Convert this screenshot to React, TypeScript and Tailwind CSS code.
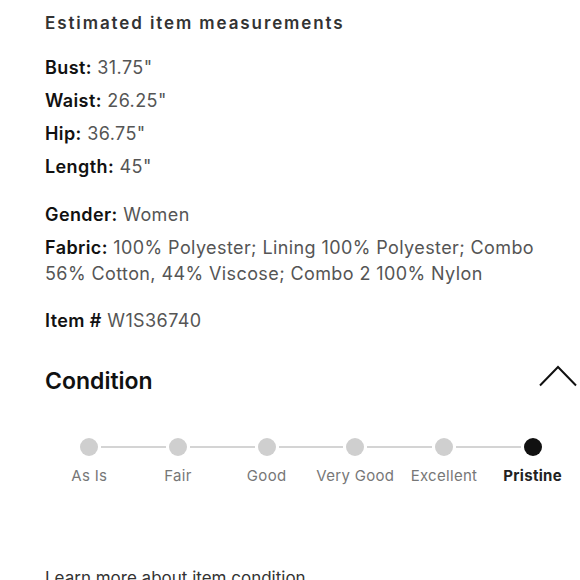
const measurements = [
  { label: "Bust:", value: '31.75"' },
  { label: "Waist:", value: '26.25"' },
  { label: "Hip:", value: '36.75"' },
  { label: "Length:", value: '45"' },
];

const grades = ["As Is", "Fair", "Good", "Very Good", "Excellent", "Pristine"];
const current = 5;

function Row({ label, value }: { label: string; value: string }) {
  return (
    <p className="text-[18px] leading-[26px] tracking-[0.4px]">
      <span className="font-semibold text-[#111]">{label}</span>{" "}
      <span className="text-[#555]">{value}</span>
    </p>
  );
}

export default function App() {
  return (
    <div
      className="w-[580px] h-[580px] overflow-hidden bg-white pl-[45px] pr-[3px] pt-[11px]"
      style={{ fontFamily: "Inter, 'Noto Sans', sans-serif" }}
    >
      <h3 className="text-[17px] leading-[24px] font-semibold tracking-[1.9px] text-[#333]">
        Estimated item measurements
      </h3>

      <div className="mt-[20px] flex flex-col gap-[7px]">
        {measurements.map((m) => (
          <Row key={m.label} {...m} />
        ))}
      </div>

      <div className="mt-[22px] flex flex-col gap-[7px]">
        <Row label="Gender:" value="Women" />
        <Row
          label="Fabric:"
          value="100% Polyester; Lining 100% Polyester; Combo 56% Cotton, 44% Viscose; Combo 2 100% Nylon"
        />
      </div>

      <div className="mt-[21px]">
        <Row label="Item #" value="W1S36740" />
      </div>

      <div className="mt-[30px] flex items-start justify-between">
        <h2 className="mt-[2px] text-[23px] leading-[30px] font-semibold text-[#111]">Condition</h2>
        <svg width="38" height="22" viewBox="0 0 38 22" fill="none" className="mt-[1px]">
          <path d="M1 20.5 L19 2 L37 20.5" stroke="#111" strokeWidth="2" />
        </svg>
      </div>

      <div className="mt-[42px] grid grid-cols-6">
        {grades.map((g, i) => (
          <div key={g} className="flex flex-col items-center">
            <div className="flex w-full items-center">
              <div className={`h-[2px] flex-1 mr-[3px] ${i === 0 ? "bg-transparent" : "bg-[#d4d4d4]"}`} />
              <div
                className={`h-[18px] w-[18px] rounded-full ${i === current ? "bg-[#111]" : "bg-[#cfcfcf]"}`}
              />
              <div
                className={`h-[2px] flex-1 ml-[3px] ${i === grades.length - 1 ? "bg-transparent" : "bg-[#d4d4d4]"}`}
              />
            </div>
            <span
              className={`mt-[10px] text-[15px] leading-[20px] tracking-[0.3px] whitespace-nowrap ${
                i === current ? "font-bold text-[#222]" : "text-[#777]"
              }`}
            >
              {g}
            </span>
          </div>
        ))}
      </div>

      <a href="#" className="mt-[80px] block text-[17px] leading-[24px] text-[#333]">
        Learn more about item condition
      </a>
    </div>
  );
}
